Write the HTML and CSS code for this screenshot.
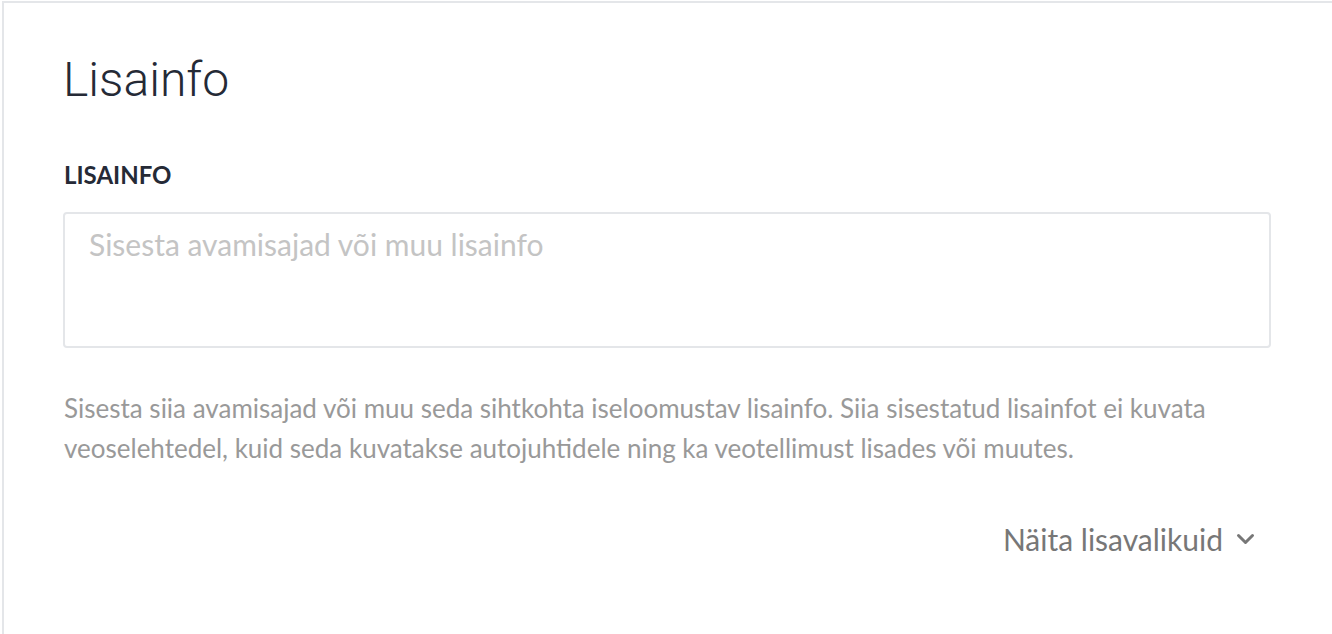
FILE: index.html
```html
<!DOCTYPE html>
<html>
<head>
  <meta charset="UTF-8">
  <meta name="viewport" content="width=device-width, initial-scale=1.0">
  <title>Lisainfo</title>
  <link rel="stylesheet" href="styles.css">
</head>

<body>
  <div class="card">
    <h1 class="title">Lisainfo</h1>

    <div class="form-group">
      <label for="info" class="field-label">LISAINFO</label>
      <textarea name="info" id="info" class="info-input" placeholder="Sisesta avamisajad või muu lisainfo"></textarea>
    </div>

    <p class="help-text">Sisesta siia avamisajad või muu seda sihtkohta iseloomustav lisainfo. Siia sisestatud lisainfot ei kuvata veoselehtedel, kuid seda kuvatakse autojuhtidele ning ka veotellimust lisades või muutes.</p>

    <div class="more-row">
      <a href="#" class="more-link">Näita lisavalikuid
        <svg class="chevron" width="19" height="12" viewBox="0 0 19 12"><path d="M2.5 2.5l7 7 7-7" fill="none" stroke="#777" stroke-width="3" stroke-linecap="round" stroke-linejoin="round"/></svg>
      </a>
    </div>
  </div>
</body>
</html>
```

FILE: styles.css
```css
body {
  margin: 0;
  padding: 1px 0 0 2px;
  background-color: #ffffff;
  font-family: Lato, "Liberation Sans", sans-serif;
  overflow: hidden;
}

.card {
  box-sizing: border-box;
  margin-right: -20px;
  height: calc(100vh - 1px);
  padding: 48px 80px 0 59px;
  border-top: 2px solid #e4e6e9;
  border-left: 2px solid #e4e6e9;
  background-color: #ffffff;
}

.title {
  margin: 0;
  font-family: Roboto, sans-serif;
  font-weight: 300;
  font-size: 48px;
  line-height: 58px;
  color: #252a36;
}

.form-group {
  margin-top: 52px;
}

.field-label {
  display: block;
  font-weight: 700;
  font-size: 24px;
  line-height: 28px;
  color: #252a36;
  margin-left: 1px;
}

.info-input {
  display: block;
  box-sizing: border-box;
  width: 1208px;
  height: 136px;
  margin-top: 23px;
  padding: 12px 24px;
  border: 2px solid #e4e6e9;
  border-radius: 4px;
  font-family: Lato, sans-serif;
  font-size: 30px;
  color: #333;
  resize: none;
  outline: none;
}

.info-input::placeholder {
  color: #c4c4c4;
}

.help-text {
  width: 1208px;
  margin: 40px 0 0 1px;
  font-size: 26px;
  line-height: 40px;
  color: #999999;
}

.more-row {
  width: 1192px;
  display: flex;
  justify-content: flex-end;
  margin-top: 53px;
}

.more-link {
  display: flex;
  align-items: center;
  gap: 13px;
  font-size: 30px;
  color: #777777;
  text-decoration: none;
}
```
